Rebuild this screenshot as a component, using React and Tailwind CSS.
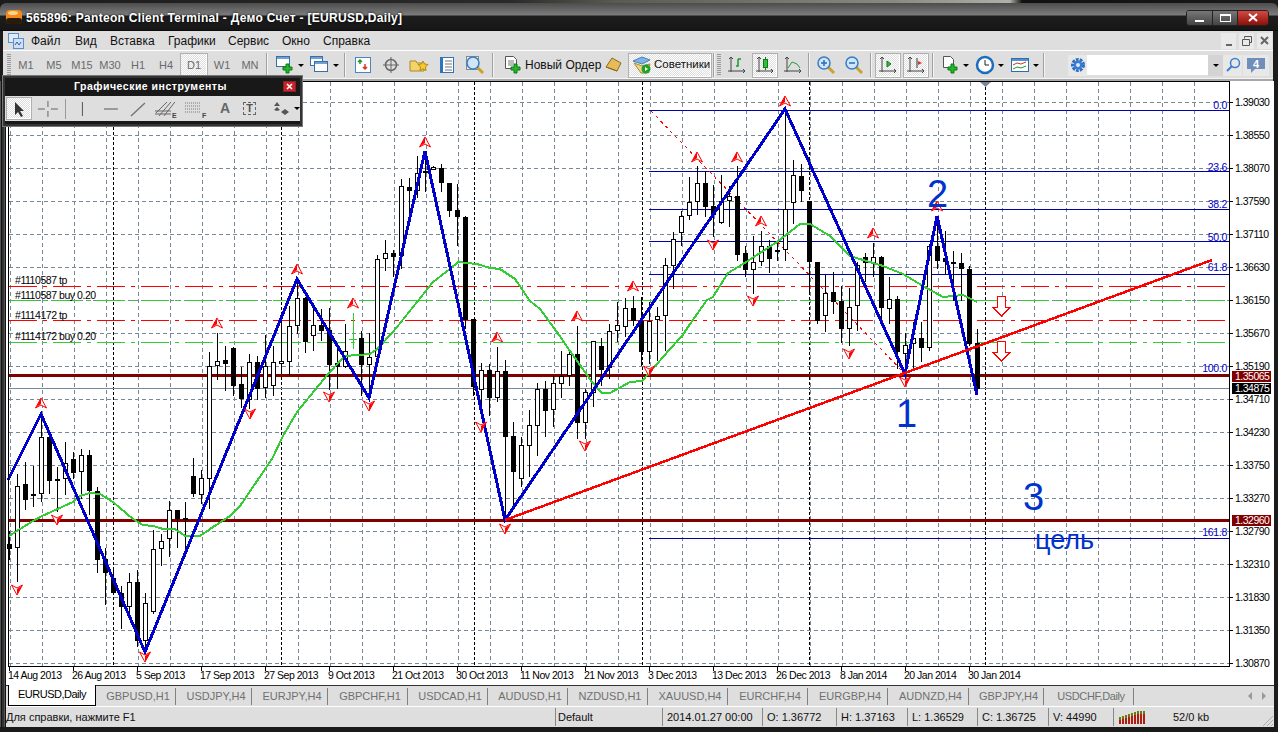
import React from "react";

// x, high, low, bodyTop, bodyBottom, white
const candles = [
  [9,532,561,545,550,0],[17,475,583,487,549,1],[25,463,511,485,501,0],[33,467,508,495,497,0],[41,415,503,438,495,1],
  [49,432,495,438,482,0],[57,468,513,480,482,1],[65,443,496,464,480,1],[73,453,480,460,474,0],[81,450,500,456,473,1],
  [89,451,516,456,492,0],[97,488,574,492,561,0],[105,549,606,560,574,0],[113,568,593,579,594,0],[121,587,630,594,608,0],
  [129,574,617,583,608,1],[137,571,648,583,642,0],[145,594,653,604,642,1],[153,531,615,550,613,1],[161,535,567,542,550,1],
  [169,502,558,511,540,1],[177,511,549,511,520,0],[185,503,550,519,521,0],[193,459,498,477,495,0],[201,471,505,479,496,1],
  [209,353,510,367,480,1],[217,334,381,362,367,1],[225,347,392,361,365,0],[233,348,397,349,387,0],[241,368,409,385,400,0],
  [249,355,410,363,401,1],[257,357,401,363,390,0],[265,336,399,367,389,1],[273,347,397,363,387,1],[281,322,373,362,365,1],
  [289,307,377,327,363,1],[297,280,335,299,327,1],[305,298,354,299,343,0],[313,308,352,326,337,1],[321,310,342,326,332,0],
  [329,309,391,331,366,0],[337,350,390,364,368,0],[345,325,369,352,368,1],[361,332,397,339,366,0],[369,334,398,358,366,1],
  [377,256,360,260,358,1],[385,241,272,254,260,1],[393,251,278,254,258,0],[401,180,270,187,257,1],[409,179,217,188,192,0],
  [417,157,199,174,192,1],[425,152,193,172,174,1],[433,167,171,168,171,1],[441,165,193,169,184,0],[449,185,218,184,212,0],
  [457,185,247,211,218,0],[465,217,330,218,321,0],[473,320,397,320,388,0],[481,364,410,371,391,1],[489,365,417,371,399,0],
  [497,348,403,372,399,1],[505,361,520,372,438,0],[513,423,507,437,473,0],[521,438,488,446,480,1],[529,411,478,426,447,1],
  [537,384,457,390,427,1],[545,382,438,390,412,0],[553,377,428,384,411,1],[561,352,399,377,385,1],[569,352,387,355,377,1],
  [577,327,440,355,424,0],[585,390,440,393,424,1],[593,342,408,342,394,1],[601,339,387,347,371,0],[609,325,380,332,369,1],
  [617,303,343,326,332,1],[625,299,338,309,328,1],[633,297,327,309,322,0],[641,298,367,322,353,0],[649,303,365,322,353,1],
  [657,308,362,317,321,1],[665,259,352,266,317,1],[673,233,290,240,267,1],[681,212,247,217,234,1],[689,178,221,203,217,1],
  [697,167,216,184,203,1],[705,172,218,184,208,0],[713,186,238,207,216,0],[721,176,225,202,224,1],[729,187,228,197,202,1],
  [737,167,262,197,256,0],[745,247,278,254,271,0],[753,237,295,263,271,1],[761,232,267,247,263,1],[769,241,274,247,260,0],
  [777,243,262,251,253,1],[785,112,262,210,251,1],[793,161,225,176,204,1],[801,165,203,177,192,0],[809,202,295,202,263,0],
  [817,263,325,263,322,0],[825,276,333,294,317,1],[833,273,315,293,303,0],[841,287,344,302,330,0],[849,289,347,308,330,1],
  [857,263,332,266,307,1],[865,254,283,258,264,0],[873,244,278,258,264,1],[881,257,320,258,309,0],[889,278,325,300,310,1],
  [897,297,370,300,353,0],[905,334,373,346,355,1],[913,323,370,339,345,1],[921,323,363,339,349,0],[929,245,352,247,349,1],
  [937,217,270,247,262,0],[945,232,275,259,263,0],[953,252,302,263,264,0],[961,254,302,264,270,0],[969,267,347,270,345,0],
  [977,330,396,344,390,0],
];

const zigzag = "8,481 41,415 145,653 297,280 369,399 425,152 505,521 785,110 905,375 937,217 977,396";
const ma =
  "9,537 20,530 33,522 42,517 73,503 80,497 90,494 100,495 113,503 133,520 143,526 153,527 163,530 175,530 185,537 200,537 213,528 230,517 240,507 272,460 283,437 297,413 328,375 345,357 370,355 377,350 393,333 417,303 433,283 450,270 458,263 477,265 490,269 500,270 515,280 530,302 540,310 557,333 570,352 592,383 602,394 610,394 630,383 642,382 650,373 670,350 682,337 690,325 707,301 713,298 728,274 743,265 777,243 800,225 810,225 830,237 850,257 883,267 903,275 923,287 943,298 963,296 977,303";

const upMarks = [[41,404],[217,324],[297,270],[353,304],[425,143],[497,338],[577,317],[633,287],[697,158],[737,158],[761,222],[785,102],[873,234],[937,207]];
const downMarks = [[17,591],[57,521],[145,658],[250,415],[329,398],[369,407],[481,428],[505,530],[585,447],[649,372],[713,246],[753,302],[849,355],[905,383]];

const prices = ["1.39030","1.38550","1.38070","1.37590","1.37110","1.36630","1.36150","1.35670","1.35190","1.34710","1.34230","1.33750","1.33270","1.32790","1.32310","1.31830","1.31350","1.30870"];
const dates = ["14 Aug 2013","26 Aug 2013","5 Sep 2013","17 Sep 2013","27 Sep 2013","9 Oct 2013","21 Oct 2013","30 Oct 2013","11 Nov 2013","21 Nov 2013","3 Dec 2013","13 Dec 2013","26 Dec 2013","8 Jan 2014","20 Jan 2014","30 Jan 2014"];
const fibs = [[111,"0.0",110],[172,"23.6",172],[210,"38.2",209],[242,"50.0",242],[275,"61.8",272],[375,"100.0",373],[539,"161.8",537]];
const orders = [
  [287, "#ff0000", "#1110587 tp", 285],
  [301, "#32cd32", "#1110587 buy 0.20", 300],
  [321, "#ff0000", "#1114172 tp", 320],
  [343, "#32cd32", "#1114172 buy 0.20", 341],
];
const separators = [113, 281, 474, 642, 809, 985];

const menu = [["Файл", 31, 29],["Вид", 75, 19],["Вставка", 110, 42],["Графики", 168, 44],["Сервис", 228, 37],["Окно", 282, 25],["Справка", 323, 43]];
const frames = ["M1","M5","M15","M30","H1","H4","D1","W1","MN"];
const tabs = [["GBPUSD,H1",80],["USDJPY,H4",76],["EURJPY,H4",76],["GBPCHF,H1",80],["USDCAD,H1",80],["AUDUSD,H1",80],["NZDUSD,H1",80],["XAUUSD,H4",80],["EURCHF,H4",80],["EURGBP,H4",80],["AUDNZD,H4",81],["GBPJPY,H4",75],["USDCHF,Daily",90]];
const statusCells = [["2014.01.27 00:00",100],["O: 1.36772",74],["H: 1.37163",71],["L: 1.36529",70],["C: 1.36725",71],["V: 44990",65]];

const Sep = ({ className = "" }) => <div className={`h-[24px] w-[2px] shrink-0 border-l border-[#a0a0a0] bg-[#f4f4f4] ${className}`} />;
const Grip = ({ className = "" }) => <div className={`h-[22px] w-[4px] shrink-0 bg-[repeating-linear-gradient(#9a9a9a_0_1px,#dedede_1px_2px)] ${className}`} />;
const Caret = () => <span className="ml-[3px] h-0 w-0 border-x-[3px] border-t-[3px] border-x-transparent border-t-black" />;
const pressed = "bg-[repeating-conic-gradient(#ffffff_0_25%,#dedede_0_50%)] bg-[length:2px_2px] border border-[#b0b0b0] shadow-[inset_-1px_-1px_0_#fff]";

const Tool = ({ w = 28, on, drop, className = "", children }) => (
  <div className={`flex h-[25px] shrink-0 items-center justify-start ${on ? pressed : ""} ${className}`} style={{ width: on ? 26 : w, paddingLeft: drop ? 0 : on ? 2 : 4 }}>
    <svg width="20" height="20" viewBox="0 0 20 20" fill="none" className="shrink-0">{children}</svg>
    {drop && <Caret />}
  </div>
);

const Axes = () => <path d="M4 2v15M1 16h17M2 4l2-2 2 2M16 14l2 2-2 2" stroke="#444" />;
const Plus = () => <path d="M11 9h3v3h3v3h-3v3h-3v-3H8v-3h3z" fill="#25b52c" stroke="#0a7a12" />;
const Win = ({ x = 1, y = 1, w = 14, h = 11 }) => (
  <g>
    <rect x={x + 0.5} y={y + 0.5} width={w} height={h} fill="#fff" stroke="#3a6ea8" />
    <rect x={x + 1} y={y + 1} width={w - 1} height="2" fill="#6fa0d8" />
  </g>
);
const Lens = ({ sign }) => (
  <g>
    <path d="M12 12l6 6" stroke="#c9a227" strokeWidth="3" />
    <circle cx="8" cy="8" r="6" fill="#cfe6fa" stroke="#3a7dc0" strokeWidth="1.5" />
    {sign && <path d={sign} stroke="#2b6cb0" strokeWidth="1.5" />}
  </g>
);

const TopBar = () => (
  <>
    <div className="h-[3px] bg-[linear-gradient(90deg,#1c1c1c_0,#2a2a2a_40%,#5a5a50_48%,#8a8a80_70%,#b0b0a8_79%,#111_80%,#1a1a1a_100%)]" />
    <div className="relative flex h-[28px] items-center rounded-t-[6px] bg-[linear-gradient(#4c4c4c_0,#7d7d7d_12px,#1e1e1e_13px,#161616_27px,#000_28px)] pl-[6px]">
      <svg width="16" height="16" viewBox="0 0 16 16">
        <rect x="0" y="1" width="16" height="14" rx="4" fill="#f28a1e" />
        <rect x="0" y="9" width="16" height="6" rx="3" fill="#2a1a0a" />
        <ellipse cx="7" cy="4" rx="5" ry="2" fill="#fdd38a" />
      </svg>
      <span className="ml-[4px] mt-[1px] text-[12px] font-bold tracking-[0.3px] text-white [text-shadow:0_0_3px_#000]">
        565896: Panteon Client Terminal - Демо Счет - [EURUSD,Daily]
      </span>
      {/* caption buttons */}
      <div className="ml-auto mr-[9px] mt-[1px] flex h-[16px] overflow-hidden rounded-[3px] border border-[#222]">
        <div className="flex w-[25px] items-end justify-center bg-[linear-gradient(#777,#444)] pb-[3px]"><span className="h-[2px] w-[9px] bg-white" /></div>
        <div className="flex w-[26px] items-center justify-center border-x border-[#222] bg-[linear-gradient(#777,#444)]"><span className="h-[8px] w-[11px] border border-t-2 border-white" /></div>
        <div className="flex w-[30px] items-center justify-center bg-[linear-gradient(#d24a42,#8c0f0a)]">
          <svg width="10" height="9" viewBox="0 0 10 9"><path d="M1 1l8 7M9 1L1 8" stroke="#fff" strokeWidth="2" /></svg>
        </div>
      </div>
    </div>
  </>
);

const MenuBar = () => (
  <div className="flex h-[20px] items-center border-b border-white bg-[#dedede] pl-[5px]">
    <svg width="16" height="16" viewBox="0 0 16 16" className="shrink-0">
      <rect x="0.5" y="0.5" width="10" height="9" fill="#dfe9f7" stroke="#5b8fc9" />
      <rect x="5.5" y="5.5" width="10" height="10" fill="#cfe0f5" stroke="#5b8fc9" />
      <path d="M7 12l2-3 2 3 2-3" stroke="#2c67a8" fill="none" />
    </svg>
    <div className="ml-[7px] flex text-[12px] text-[#111]">
      {menu.map(([label, x, w], i) => (
        <span key={label} style={{ width: w, marginLeft: i === 0 ? 0 : x - menu[i - 1][1] - menu[i - 1][2] }} className="whitespace-nowrap">{label}</span>
      ))}
    </div>
    <div className="ml-auto flex gap-[3px] pr-[1px]">
      <div className="flex h-[16px] w-[15px] items-end justify-center bg-[#eaeaea] pb-[3px]"><span className="h-[2px] w-[6px] bg-[#666]" /></div>
      <div className="flex h-[16px] w-[15px] items-center justify-center bg-[#eaeaea]">
        <svg width="10" height="10" viewBox="0 0 10 10" fill="none" stroke="#555"><path d="M2.5 2.5v-2h7v6h-2M.5 3.5h7v6h-7z" /></svg>
      </div>
      <div className="flex h-[16px] w-[15px] items-center justify-center bg-[#eaeaea]">
        <svg width="9" height="9" viewBox="0 0 9 9"><path d="M1 1l7 7M8 1L1 8" stroke="#666" strokeWidth="2" /></svg>
      </div>
    </div>
  </div>
);

const ToolBar = () => (
  <div className="flex h-[30px] items-center border-b-2 border-[#a8a8a8] bg-[#dedede] pl-[4px] shadow-[inset_0_-1px_0_#f4f4f4]">
    <Grip className="mr-[1px]" />
    <div className="flex text-[11px] text-[#6a6a6a]">
      {frames.map((f) => (
        <div key={f} className={`flex h-[25px] w-[28px] items-center justify-center ${f === "D1" ? pressed : ""}`}>{f}</div>
      ))}
    </div>
    <Sep className="ml-[2px] mr-[7px]" />
    <Tool w={29} drop><Win y={1} w={13} h={10} /><Plus /></Tool>
    <Tool w={29} drop className="ml-[6px]"><Win x={0} y={1} w={12} h={9} /><Win x={4} y={6} w={13} h={10} /></Tool>
    <Sep className="ml-[5px] mr-[3px]" />
    <Tool><rect x="2.5" y="2.5" width="15" height="15" fill="#fff" stroke="#4a84c4" /><path d="M7 9V5M5 7l2-2 2 2" stroke="#1a9a2a" strokeWidth="1.5" /><path d="M12 9v5M10 12l2 2 2-2" stroke="#d8342a" strokeWidth="1.5" /></Tool>
    <Tool><circle cx="10" cy="10" r="5.5" stroke="#666" strokeWidth="1.5" /><path d="M10 2v16M2 10h16" stroke="#666" /></Tool>
    <Tool><path d="M1 6h6l1 2h7v8H1z" fill="#f3d46c" stroke="#a88a2a" /><path d="M14 6l1.5 3 3.5.5-2.500 2.500.6 3.500-3.100-1.700-3.100 1.700.6-3.500-2.500-2.500 3.500-.5z" fill="#f7c92e" stroke="#b58a10" /></Tool>
    <Tool><rect x="3.500" y="2.500" width="13" height="15" fill="#fff" stroke="#2f74c0" /><rect x="4" y="3" width="2" height="14" fill="#2f74c0" /><path d="M8 6h7M8 9h7M8 12h7M8 15h7" stroke="#777" /></Tool>
    <Tool><rect x="1.500" y="1.500" width="12" height="13" fill="#eee" stroke="#888" /><Lens /></Tool>
    <Sep className="mx-[3px]" />
    <div className="flex h-[25px] items-center pl-[6px]">
      <svg width="20" height="20" viewBox="0 0 20 20" fill="none"><path d="M2.500 1.500h8l3 3v9h-11z" fill="#fff" stroke="#555" /><path d="M5 6h6M5 8h6M5 10h5" stroke="#777" /><Plus /></svg>
      <span className="ml-[2px] w-[74px] whitespace-nowrap text-[12px] text-[#111]">Новый Ордер</span>
    </div>
    <Tool w={26} className="ml-[1px]"><path d="M2 12l6-9 9 5-4 8z" fill="#e7bb5a" stroke="#8a6a1a" /><path d="M2 12l11 4" stroke="#8a6a1a" /></Tool>
    <div className={`ml-[2px] flex h-[25px] w-[84px] shrink-0 items-center pl-[3px] ${pressed}`}>
      <svg width="20" height="20" viewBox="0 0 20 20" className="shrink-0"><path d="M1 6l9-4 8 3-8 4z" fill="#7fb4e6" stroke="#4a7fb5" /><path d="M2 8l7 10h6l3-9-8 2z" fill="#f1d68a" stroke="#a88a2a" /><circle cx="14" cy="14" r="4.500" fill="#1fa12a" /><path d="M13 12v4l3-2z" fill="#fff" /></svg>
      <span className="ml-[2px] whitespace-nowrap text-[11.500px] text-[#111]">Советники</span>
    </div>
    <Sep className="ml-[1px]" />
    <Grip className="mx-[2px]" />
    <Tool><Axes /><path d="M11 4v7h-2M11 4h3" stroke="#1a9a2a" strokeWidth="1.500" /></Tool>
    <Tool on className="mx-[1px]"><Axes /><rect x="8.500" y="4.500" width="4" height="8" fill="#2fc03a" stroke="#0f7a18" /><path d="M10.500 2v2M10.500 13v2" stroke="#0f7a18" /></Tool>
    <Tool><Axes /><path d="M5 13l4-6 5 2 3 4" stroke="#2a9a3a" /></Tool>
    <Sep className="ml-[1px] mr-[2px]" />
    <Tool><Lens sign="M5 8h6M8 5v6" /></Tool>
    <Tool><Lens sign="M5 8h6" /></Tool>
    <Sep className="mx-[2px]" />
    <Tool on className="ml-[1px]"><Axes /><path d="M9 6v6l4-3z" fill="#2fc03a" stroke="#0f7a18" /></Tool>
    <Tool on className="mx-[2px]"><Axes /><path d="M11 3v10" stroke="#333" /><path d="M16 8l-4-2v4z" fill="#d8342a" /></Tool>
    <Sep className="ml-[1px] mr-[6px]" />
    <Tool w={29} drop><path d="M3.500 1.500h7l3 3v8h-10z" fill="#fff" stroke="#555" /><Plus /></Tool>
    <Tool w={29} drop className="ml-[6px]"><circle cx="10" cy="10" r="8" fill="#fff" stroke="#1c6cc0" strokeWidth="2.500" /><path d="M10 5v5h4" stroke="#222" /></Tool>
    <Tool w={29} drop className="ml-[6px]"><rect x="1.500" y="3.500" width="17" height="13" fill="#fff" stroke="#2c6cb0" /><rect x="2" y="4" width="16" height="2" fill="#5b8fc9" /><path d="M3 10l4-2 4 1 5-2" stroke="#c0392b" /><path d="M3 14l4-2 4 1 5-2" stroke="#1a9a2a" /></Tool>
    <Sep className="ml-[4px] mr-[23px]" />
    <div className="flex items-center">
      <div className="flex h-[21px] w-[19px] items-center justify-center bg-[#e8e8e8]">
        <svg width="16" height="16" viewBox="0 0 16 16"><circle cx="8" cy="8" r="5" fill="none" stroke="#2c6fc4" strokeWidth="4" strokeDasharray="2.500 1" /><circle cx="8" cy="8" r="4.500" fill="#3a7dd0" /><circle cx="8" cy="8" r="2" fill="#dbe9fa" /></svg>
      </div>
      <div className="h-[20px] w-[121px] bg-white" />
      <div className="flex h-[21px] w-[15px] items-center justify-center bg-[#d4d4d4] pr-[3px]"><Caret /></div>
      <div className="flex h-[21px] w-[19px] items-center justify-center bg-[#e8e8e8]">
        <svg width="16" height="16" viewBox="0 0 16 16" fill="none"><circle cx="10" cy="6" r="4.500" stroke="#3b7fcf" strokeWidth="1.500" /><path d="M7 9l-5 5" stroke="#3b7fcf" strokeWidth="2" /></svg>
      </div>
      <div className="ml-[1px] flex h-[21px] w-[26px] items-center justify-center bg-[#e8e8e8]">
        <svg width="22" height="18" viewBox="0 0 22 18">
          <path d="M2 2h18v11H10l-4 4v-4H2z" fill="#6f8fb8" />
          <text x="11" y="11.500" textAnchor="middle" fontSize="11" fontWeight="700" fill="#fff">4</text>
        </svg>
      </div>
    </div>
  </div>
);

const MarkUp = ({ x, y }) => (
  <g>
    <path d={`M${x - 5.5} ${y + 5}L${x} ${y - 5}L${x + 5.5} ${y + 5}L${x} ${y + 2}z`} fill="#fff" stroke="#f00" />
    <path d={`M${x - 5} ${y + 4.500}L${x} ${y - 5}L${x} ${y + 1}z`} fill="#f00" />
  </g>
);
const MarkDown = ({ x, y }) => (
  <g>
    <path d={`M${x - 5.5} ${y - 5}L${x} ${y + 5}L${x + 5.5} ${y - 5}L${x} ${y - 2}z`} fill="#fff" stroke="#f00" />
    <path d={`M${x + 5} ${y - 4.500}L${x} ${y + 5}L${x} ${y - 1}z`} fill="#f00" />
  </g>
);

const HollowArrow = ({ y }) => (
  <path
    d={`M997.500 ${y}h8v11h4.500l-8.500 8.500l-8.500-8.500h4.500z`}
    fill="#fff"
    stroke="#f00"
    shapeRendering="crispEdges"
  />
);

const Candle = ({ c }) => {
  const [x, hi, lo, top, bot, white] = c;
  return (
    <g>
      <rect x={x} y={hi} width="1" height={lo - hi} fill="#000" />
      {white ? (
        <rect x={x - 1.5} y={top + 0.5} width="4" height={Math.max(bot - top - 1, 1)} fill="#fff" stroke="#000" />
      ) : (
        <rect x={x - 2} y={top} width="5" height={Math.max(bot - top, 2)} fill="#000" />
      )}
    </g>
  );
};

const PriceBox = ({ y, fill, label }) => (
  <g>
    <rect x="1232" y={y} width="39" height="11" fill={fill} />
    <text x="1235" y={y + 9} fill="#fff" className="text-[10.500px] tracking-[-0.5px]">{label}</text>
  </g>
);

const Chart = () => {
  const gridX = Array.from({ length: 38 }, (_, i) => 10 + 32 * i);
  return (
    <svg width="1268" height="604" viewBox="6 82 1268 604" className="block shrink-0 bg-white">
      <g shapeRendering="crispEdges">
        {gridX.map((x) => (
          <line key={x} x1={x + 0.5} x2={x + 0.5} y1="83" y2="667" stroke="#778899" strokeDasharray="4 3" />
        ))}
        {prices.map((p, i) => (
          <g key={p}>
            <line x1="9" x2="1229" y1={103.5 + 33 * i} y2={103.5 + 33 * i} stroke="#778899" strokeDasharray="4 3" />
            <rect x="1229" y={103 + 33 * i} width="4" height="1" fill="#000" />
          </g>
        ))}
        {separators.map((x) => (
          <line key={x} x1={x + 0.5} x2={x + 0.5} y1="83" y2="667" stroke="#000" strokeDasharray="3 2" />
        ))}
        {orders.map(([y, color]) => (
          <line key={y} x1="9" x2="1229" y1={y + 0.5} y2={y + 0.5} stroke={color} strokeDasharray="28 6 4 6" />
        ))}
        {fibs.map(([y]) => (
          <rect key={y} x="649" y={y} width="580" height="1" fill="#0000aa" />
        ))}
        <rect x="9" y="375" width="1220" height="3" fill="#800000" />
        <rect x="9" y="520" width="1220" height="3" fill="#800000" />
        <rect x="9" y="389" width="1220" height="1" fill="#778899" />
        <line x1="651" y1="112" x2="905" y2="375" stroke="#f00" strokeDasharray="3 4" />
      </g>

      <g shapeRendering="crispEdges">
        {candles.map((c) => <Candle key={c[0]} c={c} />)}
        <path d="M353 314v36M349 340h8" stroke="#32cd32" fill="none" />
        <polyline points={ma} fill="none" stroke="#32cd32" strokeWidth="2" />
        <polyline points={zigzag} fill="none" stroke="#0000cd" strokeWidth="3" />
        <line x1="505" y1="521" x2="1212" y2="261" stroke="#f00" strokeWidth="2.500" />
      </g>

      {upMarks.map(([x, y]) => <MarkUp key={x} x={x} y={y} />)}
      {downMarks.map(([x, y]) => <MarkDown key={x} x={x} y={y} />)}
      <HollowArrow y={297.500} />
      <HollowArrow y={342.500} />

      <path d="M980 83h11l-5.500 5z" fill="#778899" />

      {orders.map(([, , label, y]) => (
        <text key={label} x="15" y={y} fill="#000" className="text-[10.500px] tracking-[-0.45px]">{label}</text>
      ))}
      {fibs.map(([y, label, ty]) => (
        <text key={label} x="1227" y={ty} textAnchor="end" fill="#0000c8" className="text-[10.500px] tracking-[-0.3px]">{label}</text>
      ))}

      <text x="896" y="428" fill="#0033cc" className="text-[38px]">1</text>
      <text x="927" y="208" fill="#0033cc" className="text-[38px]">2</text>
      <text x="1023" y="511" fill="#0033cc" className="text-[38px]">3</text>
      <text x="1035" y="550" fill="#0033cc" className="text-[27px]">цель</text>

      {/* frame and price axis */}
      <rect x="8" y="82" width="1221" height="1" fill="#000" />
      <rect x="8" y="82" width="1" height="586" fill="#000" />
      <rect x="1229" y="82" width="1" height="586" fill="#000" />
      <rect x="8" y="667" width="1222" height="1" fill="#000" />
      {prices.map((p, i) => (
        <text key={p} x="1235" y={107 + 33 * i} fill="#000" className="text-[10.500px] tracking-[-0.5px]">{p}</text>
      ))}
      <PriceBox y={372} fill="#800000" label="1.35065" />
      <PriceBox y={384} fill="#000" label="1.34875" />
      <PriceBox y={516} fill="#800000" label="1.32960" />

      {/* time axis */}
      {dates.map((d, i) => (
        <g key={d}>
          <rect x={9 + 64 * i} y="668" width="1" height="4" fill="#000" />
          <text x={8 + 64 * i} y="680" fill="#000" className="text-[10.500px] tracking-[-0.5px]">{d}</text>
        </g>
      ))}
    </svg>
  );
};

const Tabs = () => (
  <div className="relative flex h-[21px] border-t border-[#333] bg-[#dedede] text-[11px]">
    <div className="relative -mt-px ml-[2px] flex h-[21px] w-[88px] items-center justify-center border-x border-b border-black bg-white pb-[1px] tracking-[-0.5px] text-[#000]">EURUSD,Daily</div>
    <div className="flex text-[#707070]">
      {tabs.map(([label, w]) => (
        <div key={label} className={`flex h-[17px] items-center justify-center self-center border-r border-[#808080] pl-[5px] ${label.endsWith("Daily") ? "tracking-[-0.4px]" : ""}`} style={{ width: w }}>{label}</div>
      ))}
    </div>
    <div className="ml-auto flex items-center gap-[10px] pr-[8px]">
      <span className="h-0 w-0 border-y-[4px] border-r-[4px] border-y-transparent border-r-[#999]" />
      <span className="h-0 w-0 border-y-[4px] border-l-[4px] border-y-transparent border-l-[#999]" />
    </div>
  </div>
);

const SignalBars = () => (
  <svg width="26" height="14" viewBox="0 0 26 14" shapeRendering="crispEdges">
    {Array.from({ length: 9 }, (_, i) => (
      <g key={i}>
        <rect x={i * 3} y={Math.max(9 - i, 3) - 2} width="2" height={7 - Math.max(i - 2, 0) + Math.min(i, 2)} fill="#6b7a10" />
        <rect x={i * 3} y={10 - Math.min(i, 6)} width="2" height={4 + Math.min(i, 6)} fill="#b01c10" />
      </g>
    ))}
  </svg>
);

const StatusBar = () => (
  <div className="flex h-[21px] items-center border-t border-white bg-[#dedede] text-[11px] text-[#111]">
    <span className="w-[549px] shrink-0 whitespace-nowrap">Для справки, нажмите F1</span>
    <div className="flex h-[18px] w-[107px] shrink-0 items-center border-l border-[#888] pl-[2px]">Default</div>
    {statusCells.map(([label, w]) => (
      <div key={label} className="flex h-[18px] shrink-0 items-center whitespace-nowrap border-l border-[#888] pl-[4px]" style={{ width: w }}>{label}</div>
    ))}
    <div className="flex h-[18px] w-[160px] shrink-0 items-center border-l border-[#888] pl-[5px]">
      <SignalBars />
      <span className="ml-[28px]">52/0 kb</span>
      <svg width="12" height="12" viewBox="0 0 12 12" className="ml-auto self-end" stroke="#aaa"><path d="M2 12L12 2M6 12l6-6M10 12l2-2" /></svg>
    </div>
  </div>
);

const Palette = () => (
  <div className="absolute left-[3px] top-[76px] z-10 w-[299px] border-2 border-[#333] bg-[#181818] pb-[3px] outline outline-[#777]">
    <div className="relative flex h-[18px] items-center justify-center pr-[4px] text-[10.500px] font-bold tracking-[0.5px] text-white">
      Графические инструменты
      <span className="absolute right-[5px] top-[4px] flex h-[9px] w-[11px] items-center justify-center bg-[#c8222a] outline outline-[#822]">
        <svg width="7" height="7" viewBox="0 0 7 7"><path d="M1 1l5 5M6 1L1 6" stroke="#fff" strokeWidth="1.500" /></svg>
      </span>
    </div>
    <div className="flex h-[25px] items-center bg-[#dedede] pl-[1px] text-[#555]">
      <div className={`flex h-[23px] w-[26px] items-center justify-center ${pressed}`}>
        <svg width="14" height="16" viewBox="0 0 14 16"><path d="M3 1v13l3-3 3 5 2-1-3-5h4z" fill="#333" /></svg>
      </div>
      <svg width="30" height="20" viewBox="0 0 30 20" stroke="#666" className="ml-[1px]"><path d="M15 2v6M15 12v6M5 10h7M18 10h7" /></svg>
      <div className="mx-[2px] h-[20px] w-px bg-[#999]" />
      <svg width="28" height="20" viewBox="0 0 28 20" stroke="#555"><path d="M14.500 3v14" /></svg>
      <svg width="28" height="20" viewBox="0 0 28 20" stroke="#555"><path d="M8 10h14" /></svg>
      <svg width="28" height="20" viewBox="0 0 28 20" stroke="#777" strokeWidth="1.500"><path d="M7 17L21 4" /></svg>
      <svg width="30" height="20" viewBox="0 0 30 20" stroke="#666" fill="none"><path d="M4 12h16M4 15h16M8 17L20 3M13 17L24 3M5 14L16 3" /><text x="21" y="19" fontSize="7" fontWeight="700" fill="#444" stroke="none">E</text></svg>
      <svg width="30" height="20" viewBox="0 0 30 20" stroke="#777" strokeDasharray="1 1"><path d="M4 4h16M4 7h16M4 10h16M4 13h16" /><text x="21" y="19" fontSize="7" fontWeight="700" fill="#444" stroke="none" strokeDasharray="0">F</text></svg>
      <span className="flex w-[28px] justify-center text-[14px] font-bold text-[#666]">A</span>
      <div className="ml-[4px] flex h-[13px] w-[13px] items-center justify-center border border-dashed border-[#666] text-[11px] font-bold text-[#555]">T</div>
      <div className="ml-[15px] flex items-center">
        <svg width="20" height="16" viewBox="0 0 20 16" fill="#555"><path d="M6 1l-3 4h6zM6 6l3 3-3 1-3-1zM14 8l-4 3 4 3 4-3z" /></svg>
        <Caret />
      </div>
    </div>
  </div>
);

export default function App() {
  return (
    <div className="relative h-[732px] w-[1278px] overflow-hidden bg-[#1a1a1a] font-['Liberation_Sans',Arial,sans-serif]">
      <TopBar />
      <div className="flex">
        <div className="w-[3px] shrink-0 bg-[#1c1c1c]" />
        <div className="min-w-0 flex-1">
          <MenuBar />
          <ToolBar />
        </div>
        <div className="w-[5px] shrink-0 bg-[#1c1c1c]" />
      </div>
      <div className="flex">
        <div className="w-[6px] shrink-0 bg-[repeating-linear-gradient(90deg,#555_0_1px,#111_1px_2px,#333_2px_4px)]" />
        <div className="w-[1268px] shrink-0">
          <Chart />
          <Tabs />
          <StatusBar />
        </div>
        <div className="w-[4px] shrink-0 bg-[#1c1c1c]" />
      </div>
      <Palette />
    </div>
  );
}
